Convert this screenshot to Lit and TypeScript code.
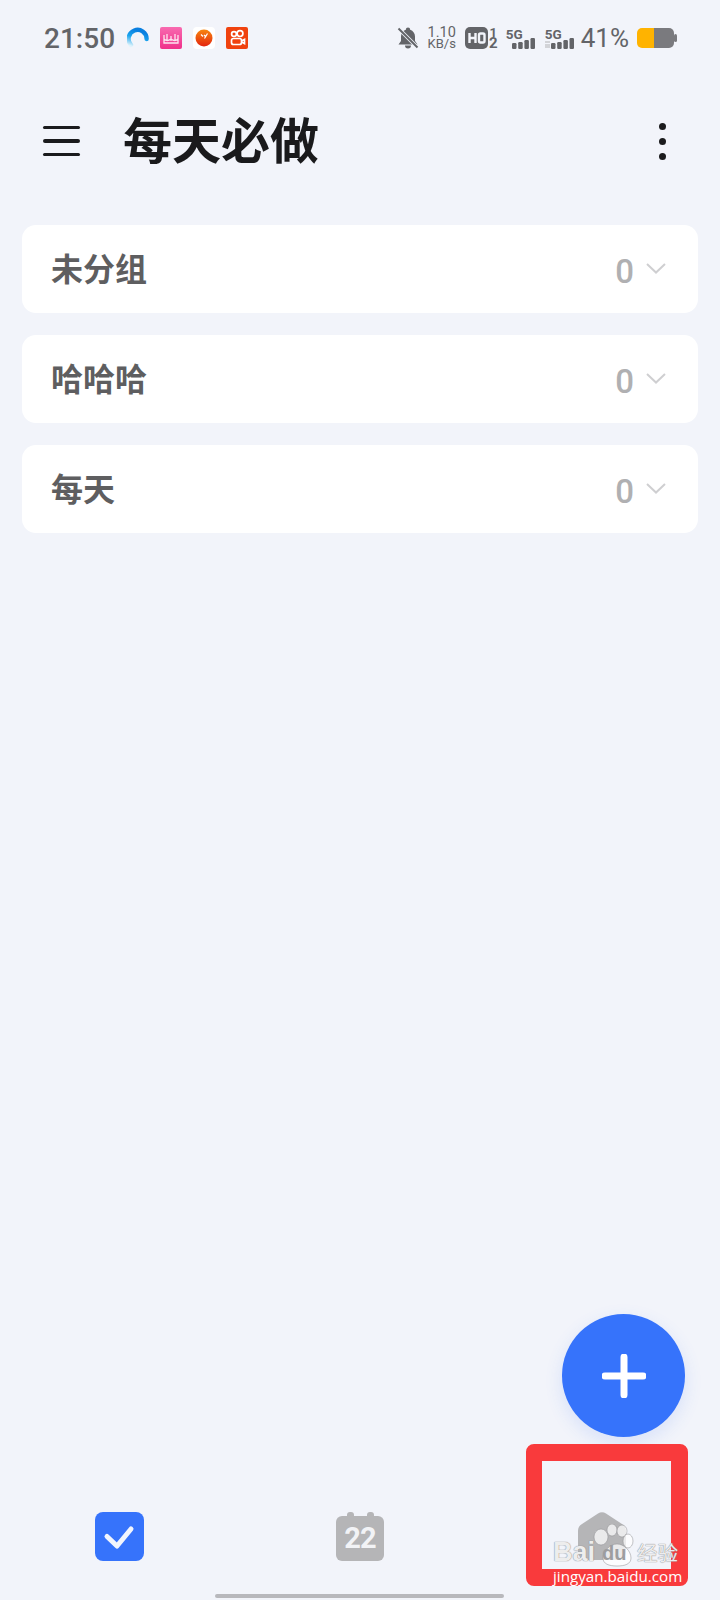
import { LitElement, html, css, svg } from 'lit';
import { customElement } from 'lit/decorators.js';

const GROUPS = ['未分组', '哈哈哈', '每天'];

const signal = (withGhost: boolean) => svg`
  <svg class="bars" width="29" height="11" viewBox="0 0 29 11">
    ${withGhost ? svg`<path d="M0 3h5v2H0zM0 6h5v4H0z" fill="#d2d3d7"/>` : ''}
    <rect x="6" y="5" width="4.5" height="6" rx="1.2" fill="#636468"/>
    <rect x="12.200" y="4" width="4.5" height="7" rx="1.2" fill="#636468"/>
    <rect x="18.400" y="2" width="4.5" height="9" rx="1.2" fill="#636468"/>
    <rect x="24.500" y="0" width="4.5" height="11" rx="1.2" fill="#636468"/>
  </svg>`;

@customElement('app-root')
export class AppRoot extends LitElement {
  static styles = css`
    :host {
      display: flex;
      flex-direction: column;
      position: relative;
      width: 720px;
      height: 1600px;
      overflow: hidden;
      background: #f2f4fa;
      font-family: Roboto, 'Noto Sans CJK SC', sans-serif;
    }

    .status {
      display: flex;
      align-items: center;
      height: 76px;
      padding: 0 43px 0 44px;
      color: #636468;
    }
    .time {
      font-size: 28px;
      font-weight: 500;
      margin-right: 12px;
    }
    .apps {
      display: flex;
      align-items: center;
      gap: 11px;
    }
    .apps svg {
      display: block;
    }
    .sys {
      margin-left: auto;
      display: flex;
      align-items: center;
    }
    .sys svg {
      display: block;
    }
    .speed {
      display: flex;
      flex-direction: column;
      align-items: center;
      width: 28px;
      margin: 0 9px 0 9px;
      font-size: 14.5px;
      line-height: 11px;
      font-weight: 400;
    }
    .speed span + span {
      font-size: 13px;
    }
    .sim {
      display: flex;
      flex-direction: column;
      align-items: center;
      width: 9px;
      font-size: 13px;
      font-weight: 700;
      line-height: 11px;
      margin: 0 8px 0 1px;
    }
    .sim span + span {
      font-size: 15px;
    }
    .net {
      display: flex;
      flex-direction: column;
      width: 29px;
      margin-right: 10px;
      font-size: 13.5px;
      font-weight: 700;
      line-height: 12px;
    }
    .net + .pct {
      margin-left: -3px;
    }
    .net .bars {
      margin-top: -2px;
    }
    .net span {
      height: 12px;
    }
    .pct {
      font-size: 26px;
      margin-right: 8px;
    }

    header {
      display: flex;
      align-items: center;
      height: 100px;
      padding: 0 54px 0 43px;
      margin-top: 15px;
    }
    .menu {
      display: flex;
      flex-direction: column;
      gap: 10px;
      width: 37px;
      margin-right: 43px;
    }
    .menu i {
      display: block;
      height: 3.5px;
      border-radius: 2px;
      background: #1b1b1d;
    }
    h1 {
      flex: 1;
      margin: 3px 0 0;
      font-size: 49px;
      line-height: 60px;
      font-weight: 700;
      color: #1a1a1c;
    }
    .more {
      display: flex;
      flex-direction: column;
      gap: 8px;
    }
    .more i {
      display: block;
      width: 7px;
      height: 7px;
      border-radius: 50%;
      background: #1b1b1d;
    }

    .list {
      display: flex;
      flex-direction: column;
      gap: 22px;
      padding: 0 22px;
      margin-top: 34px;
    }
    .card {
      display: flex;
      align-items: center;
      height: 88px;
      padding: 0 32px 0 29px;
      background: #fff;
      border-radius: 14px;
    }
    .name {
      flex: 1;
      margin-bottom: 4px;
      font-size: 32px;
      font-weight: 700;
      color: #5e5e60;
    }
    .count {
      font-size: 33px;
      font-weight: 500;
      color: #b0b0b2;
      margin: 4px 12px 0 0;
    }
    .card svg {
      display: block;
      margin-top: -2px;
    }

    .fill {
      flex: 1;
    }

    .tabs {
      display: flex;
      align-items: flex-start;
      gap: 192px;
      height: 88px;
      padding-left: 95px;
    }
    .tabs svg {
      display: block;
    }
    .tabs svg:last-child {
      margin-left: 2px;
    }
    .day {
      font-family: Roboto, sans-serif;
      font-weight: 700;
      font-size: 29px;
      letter-spacing: -1px;
      fill: #f2f3f6;
    }

    .home-bar {
      position: absolute;
      left: 215px;
      bottom: 2px;
      width: 289px;
      height: 4px;
      border-radius: 2px;
      background: #b8b8bc;
    }

    .fab {
      position: absolute;
      left: 562px;
      top: 1314px;
      width: 123px;
      height: 123px;
      border-radius: 50%;
      background: #3673fb;
      box-shadow: 0 6px 18px rgba(54, 115, 251, 0.14);
      display: flex;
      align-items: center;
      justify-content: center;
    }

    .mark {
      position: absolute;
      left: 526px;
      top: 1444px;
      width: 162px;
      height: 142px;
      box-sizing: border-box;
      border: 17px solid #f93a3c;
      border-left-width: 16px;
      border-radius: 8px;
    }
    /* watermark pasted over the corner of the photo */
    .baidu {
      position: absolute;
      left: 553px;
      top: 1536px;
      width: 130px;
      color: rgba(255, 255, 255, 0.88);
    }
    .baidu svg {
      position: absolute;
      left: 38px;
      top: -12px;
    }
    .logo {
      display: flex;
      align-items: center;
      font-family: 'Liberation Sans', sans-serif;
      font-size: 27px;
      font-weight: 700;
      height: 32px;
      position: relative;
      color: rgba(255, 255, 255, 0.85);
      text-shadow: 0 0 1px #8e8e92, 0 0 1px #8e8e92;
    }
    .logo .du {
      font-size: 20px;
      margin: 2px 0 0 7px;
      color: #9d9d9f;
      text-shadow: none;
    }
    .logo .cn {
      font-family: 'Noto Sans CJK SC', sans-serif;
      font-size: 20.500px;
      font-weight: 400;
      margin-left: auto;
      margin-right: 5px;
    }
    .url {
      font-family: 'Open Sans', sans-serif;
      font-size: 15.200px;
      line-height: 22px;
      margin-top: -3px;
      white-space: nowrap;
      color: #fff;
    }
  `;

  private renderApps() {
    return html`<div class="apps">
      <svg width="22" height="22" viewBox="0 0 22 22">
        <defs>
          <linearGradient id="ring" x1="0" y1="1" x2="0.4" y2="0">
            <stop offset="0" stop-color="#dff3fb" />
            <stop offset="0.55" stop-color="#1aa4ee" />
            <stop offset="1" stop-color="#0a7fe0" />
          </linearGradient>
          <linearGradient id="pink" x1="0" y1="0" x2="0" y2="1">
            <stop offset="0" stop-color="#f86ab0" />
            <stop offset="1" stop-color="#f0308a" />
          </linearGradient>
          <linearGradient id="ball" x1="0" y1="0" x2="0" y2="1">
            <stop offset="0" stop-color="#f7860f" />
            <stop offset="1" stop-color="#e4240f" />
          </linearGradient>
        </defs>
        <path d="M4 18A9 9 0 1 1 19.600 12" fill="none" stroke="url(#ring)" stroke-width="4.400" stroke-linecap="round" />
      </svg>
      <svg width="22" height="22" viewBox="0 0 22 22">
        <rect width="22" height="22" rx="2" fill="url(#pink)" />
        <path d="M4 8v8h14V8M7 7v6M11 9v5M15 7v6M4 12q3 3 7 0q4 3 7 0" fill="none" stroke="#fde3ef" stroke-width="1.300" />
      </svg>
      <svg width="22" height="22" viewBox="0 0 22 22">
        <rect width="22" height="22" rx="4" fill="#fff" />
        <circle cx="11" cy="11" r="8.500" fill="url(#ball)" />
        <path d="M8 7.500l2 2M11 8l2 2M14.500 6.500l-3 5" stroke="#fff" stroke-width="1.200" fill="none" />
      </svg>
      <svg width="22" height="22" viewBox="0 0 22 22">
        <rect width="22" height="22" rx="2" fill="#f0420e" />
        <g fill="none" stroke="#fff" stroke-width="1.700">
          <circle cx="8" cy="7" r="2.400" />
          <circle cx="14" cy="6.600" r="2.900" />
          <rect x="5.500" y="11.500" width="10" height="6" rx="2" />
          <path d="M15.500 14l3-1.500v4l-3-1.500" />
        </g>
      </svg>
    </div>`;
  }

  private renderSys() {
    return html`<div class="sys">
      <svg width="22" height="22" viewBox="0 0 22 22">
        <path d="M11 0.500a2.200 2.200 0 0 1 2.200 2.200c3 1 4.800 3.800 4.800 6.800v4.500l2.500 3.500H1.500l2.500-3.500V9.500c0-3 1.800-5.800 4.800-6.800a2.200 2.200 0 0 1 2.200-2.200zM8 18.500h6a3 3 0 0 1-6 0z" fill="#636468" />
        <path d="M1.500 1.500l19 19" stroke="#f2f4fa" stroke-width="3.800" />
        <path d="M1.500 1.500l19 19" stroke="#636468" stroke-width="2" />
      </svg>
      <div class="speed"><span>1.10</span><span>KB/s</span></div>
      <svg width="23" height="22" viewBox="0 0 23 22">
        <rect width="23" height="22" rx="5" fill="#636468" />
        <path d="M4.500 6v10M10.500 6v10M4.500 11h6" stroke="#f2f4fa" stroke-width="2.400" fill="none" />
        <rect x="14" y="6.500" width="5.500" height="9" rx="1.500" stroke="#f2f4fa" stroke-width="2.400" fill="none" />
      </svg>
      <div class="sim"><span>1</span><span>2</span></div>
      <div class="net"><span>5G</span>${signal(false)}</div>
      <div class="net"><span>5G</span>${signal(true)}</div>
      <span class="pct">41%</span>
      <svg width="40" height="20" viewBox="0 0 40 20">
        <rect x="37" y="6" width="3" height="8" rx="1.500" fill="#7a7a7e" />
        <path d="M5 0h12v20H5a5 5 0 0 1-5-5V5a5 5 0 0 1 5-5z" fill="#ffb300" />
        <path d="M17 0h15a5 5 0 0 1 5 5v10a5 5 0 0 1-5 5H17z" fill="#7a7a7e" />
      </svg>
    </div>`;
  }

  private renderTabs() {
    return html`<nav class="tabs">
      <svg width="49" height="49" viewBox="0 0 49 49">
        <rect width="49" height="49" rx="8" fill="#3673fb" />
        <path d="M12 24.500l10 9.500L36 17" fill="none" stroke="#f2f5fd" stroke-width="5" stroke-linecap="round" stroke-linejoin="round" />
      </svg>
      <svg width="48" height="49" viewBox="0 0 48 49">
        <rect x="11" y="0" width="7" height="9" rx="3" fill="#b5b5b7" />
        <rect x="31" y="0" width="7" height="9" rx="3" fill="#b5b5b7" />
        <rect y="4" width="48" height="45" rx="6" fill="#b5b5b7" />
        <text class="day" x="24" y="36" text-anchor="middle">22</text>
      </svg>
      <svg width="48" height="48" viewBox="0 0 48 48">
        <path d="M20 1.500a8 8 0 0 1 8 0l16 10.500a8 8 0 0 1 4 7V40a8 8 0 0 1-8 8H8a8 8 0 0 1-8-8V19a8 8 0 0 1 4-7z" fill="#b5b5b7" />
      </svg>
    </nav>`;
  }

  render() {
    return html`
      <div class="status">
        <span class="time">21:50</span>
        ${this.renderApps()} ${this.renderSys()}
      </div>
      <header>
        <div class="menu"><i></i><i></i><i></i></div>
        <h1>每天必做</h1>
        <div class="more"><i></i><i></i><i></i></div>
      </header>
      <section class="list">
        ${GROUPS.map(
          (g) => html`<div class="card">
            <span class="name">${g}</span>
            <span class="count">0</span>
            <svg width="20" height="11" viewBox="0 0 20 11">
              <path d="M1 1l9 8.500L19 1" fill="none" stroke="#cfcfd1" stroke-width="2" />
            </svg>
          </div>`,
        )}
      </section>
      <div class="fill"></div>
      ${this.renderTabs()}
      <div class="home-bar"></div>
      <div class="fab">
        <svg width="44" height="44" viewBox="0 0 44 44">
          <path d="M22 3v38M3 22h38" stroke="#fff" stroke-width="7" stroke-linecap="round" />
        </svg>
      </div>
      <div class="mark"></div>
      <div class="baidu">
        <svg width="54" height="44" viewBox="0 0 54 44" fill="rgba(255,255,255,0.72)" stroke="rgba(140,140,144,0.5)">
          <ellipse cx="10" cy="13" rx="7" ry="8" />
          <ellipse cx="21" cy="6" rx="5" ry="6" />
          <ellipse cx="31" cy="7" rx="5" ry="6" />
          <ellipse cx="37" cy="17" rx="5" ry="7" />
          <path d="M26 20c7 0 14 7 14 14c0 6-6 8-14 8s-14-2-14-8c0-7 7-14 14-14z" />
        </svg>
        <div class="logo"><span>Bai</span><span class="du">du</span><span class="cn">经验</span></div>
        <div class="url">jingyan.baidu.com</div>
      </div>
    `;
  }
}
